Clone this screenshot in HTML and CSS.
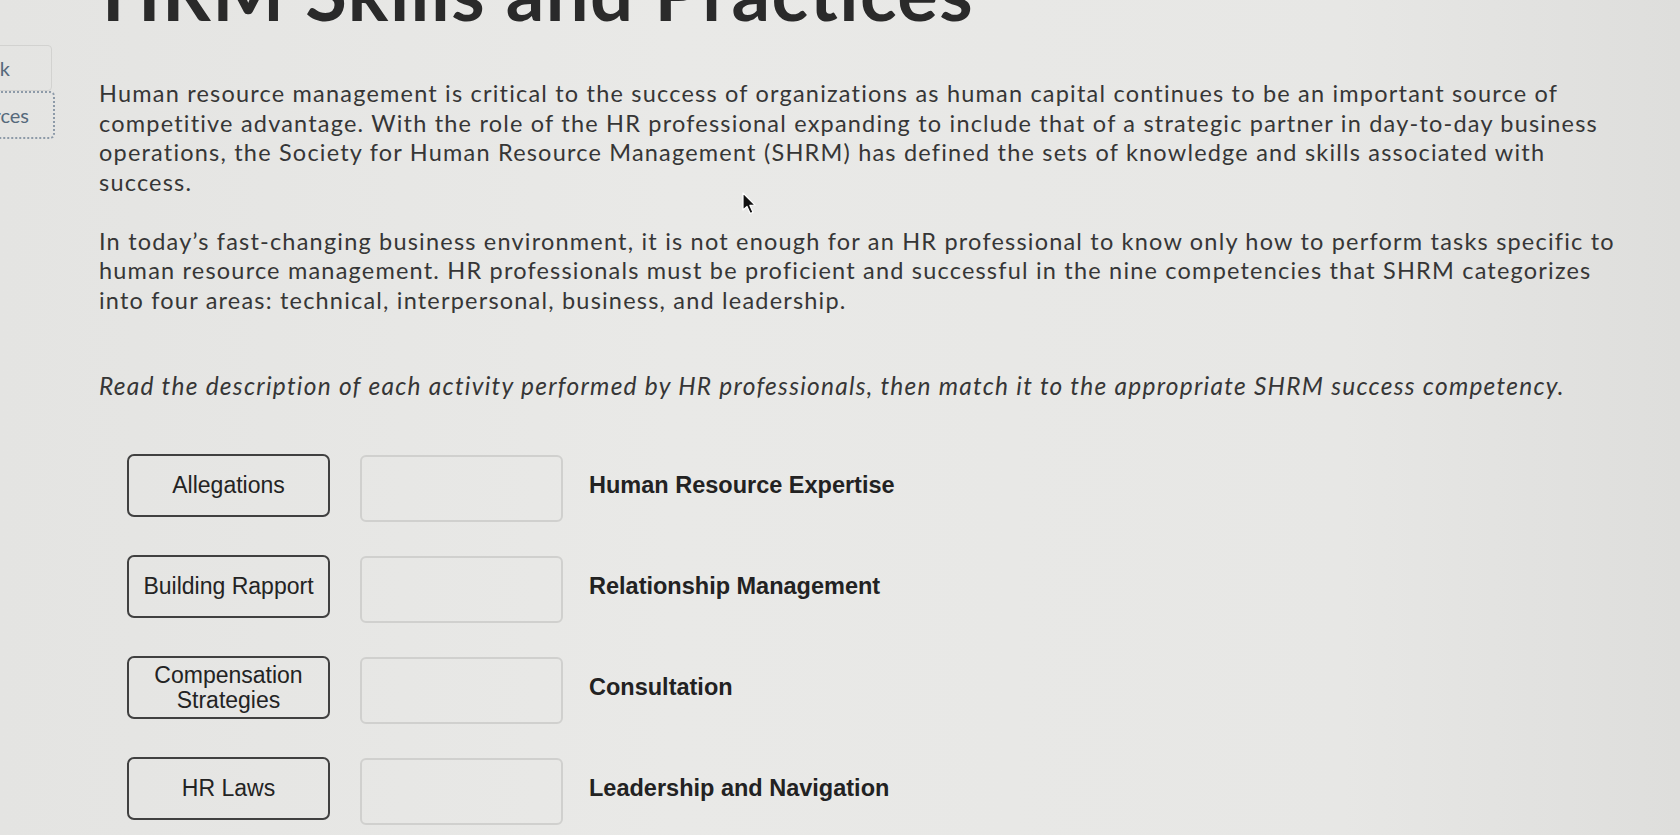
FILE: index.html
```html
<!DOCTYPE html>
<html lang="en">
<head>
    <meta charset="UTF-8">
    <meta name="viewport" content="width=device-width, initial-scale=1.0">
    <title>HRM Skills and Practices</title>
    <link rel="stylesheet" href="styles.css">
</head>
<body>
    <div class="page">
        <nav class="side-tabs">
            <div class="tab">Task</div>
            <div class="tab tab-active">Resources</div>
        </nav>

        <main class="content">
            <h1>HRM Skills and Practices</h1>

            <p>Human resource management is critical to the success of organizations as human capital continues to be an important source of competitive advantage. With the role of the HR professional expanding to include that of a strategic partner in day-to-day business operations, the Society for Human Resource Management (SHRM) has defined the sets of knowledge and skills associated with success.</p>

            <p>In today’s fast-changing business environment, it is not enough for an HR professional to know only how to perform tasks specific to human resource management. HR professionals must be proficient and successful in the nine competencies that SHRM categorizes into four areas: technical, interpersonal, business, and leadership.</p>

            <p class="instructions">Read the description of each activity performed by HR professionals, then match it to the appropriate SHRM success competency.</p>

            <div class="matching">
                <div class="match-row">
                    <div class="choice">Allegations</div>
                    <div class="drop"></div>
                    <div class="competency">Human Resource Expertise</div>
                </div>
                <div class="match-row">
                    <div class="choice">Building Rapport</div>
                    <div class="drop"></div>
                    <div class="competency">Relationship Management</div>
                </div>
                <div class="match-row">
                    <div class="choice">Compensation Strategies</div>
                    <div class="drop"></div>
                    <div class="competency">Consultation</div>
                </div>
                <div class="match-row">
                    <div class="choice">HR Laws</div>
                    <div class="drop"></div>
                    <div class="competency">Leadership and Navigation</div>
                </div>
            </div>
        </main>

        <!-- mouse pointer left on the screen -->
        <svg class="pointer" width="16" height="24" viewBox="0 0 16 24">
            <path d="M1 1 L1 18 L5 14.5 L8.2 21.5 L11 20.3 L7.9 13.4 L13 13.2 Z" fill="#111" stroke="#fff" stroke-width="1.2" stroke-linejoin="round"/>
        </svg>
    </div>
</body>
</html>
```

FILE: styles.css
```css
body {
    margin: 0;
    background-color: #e7e7e5;
    font-family: Lato, "Open Sans", sans-serif;
    color: #363636;
    overflow: hidden;
}
.page {
    position: relative;
    display: flex;
    min-height: 835px;
    background: linear-gradient(90deg, #e4e4e2 0%, #e9e9e7 40%, #e7e7e5 80%, #dededc 100%);
}
.side-tabs {
    flex-shrink: 0;
    width: 55px;
    padding-top: 45px;
}
.tab {
    width: 120px;
    height: 46px;
    margin-left: -68px;
    box-sizing: border-box;
    padding-right: 41px;
    border: 1px solid #d2d2d0;
    border-radius: 0 4px 4px 0;
    text-align: right;
    line-height: 44px;
    font-size: 20px;
    color: #56697b;
    white-space: nowrap;
}
.tab-active {
    width: 123px;
    height: 48px;
    padding-right: 24px;
    border: 2px dotted #8d9aa8;
    border-radius: 0 5px 5px 0;
}
.content {
    width: 1524px;
    margin-left: 44px;
}
h1 {
    margin: -48px 0 47px 3px;
    font-size: 76px;
    font-weight: 700;
    line-height: 80px;
    letter-spacing: 1.4px;
    color: #2a2a2a;
}
p {
    margin: 0 0 29.5px;
    font-size: 23.5px;
    line-height: 29.5px;
    letter-spacing: 1.2px;
}
.instructions {
    margin-top: 56px;
    font-size: 24.5px;
    letter-spacing: 1.25px;
    font-style: italic;
}
.matching {
    margin-top: 53px;
    margin-left: 28px;
}
.match-row {
    display: flex;
    align-items: center;
    height: 64px;
    margin-bottom: 37px;
}
.choice {
    width: 203px;
    height: 63px;
    box-sizing: border-box;
    display: flex;
    align-items: center;
    justify-content: center;
    padding: 0 8px;
    border: 2px solid #404040;
    border-radius: 7px;
    text-align: center;
    font-family: "Liberation Sans", Arial, sans-serif;
    font-size: 23px;
    line-height: 25px;
    color: #232323;
}
.drop {
    width: 203px;
    height: 67px;
    box-sizing: border-box;
    margin: 6px 0 0 30px;
    border: 2px solid #d0d0ce;
    border-radius: 6px;
}
.competency {
    margin-left: 26px;
    font-family: "Liberation Sans", Arial, sans-serif;
    font-size: 23.5px;
    font-weight: 700;
    color: #222;
}
.pointer {
    position: absolute;
    left: 742px;
    top: 192px;
}
```
